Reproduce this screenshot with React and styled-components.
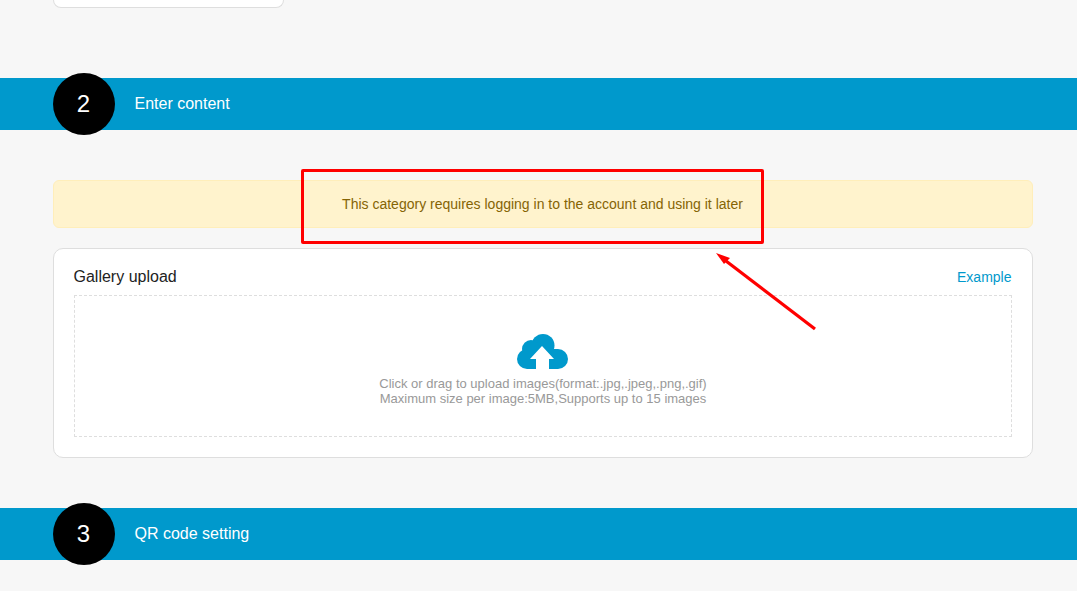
import React from "react";
import styled, { createGlobalStyle } from "styled-components";

const Global = createGlobalStyle`
  html, body { margin: 0; padding: 0; background: #f7f7f7; }
  body { font-family: "Liberation Sans", Arial, sans-serif; }
  * { box-sizing: border-box; }
`;
const Page = styled.div`
  position: relative;
  width: 1077px;
  height: 591px;
  overflow: hidden;
  background: #f7f7f7;
`;
const PrevCard = styled.div`
  width: 231px;
  height: 8px;
  margin-left: 53px;
  background: #fff;
  border: 1px solid #dedede;
  border-top: none;
  border-radius: 0 0 10px 10px;
`;
const StepBar = styled.div`
  display: flex;
  align-items: center;
  gap: 20px;
  height: 52px;
  margin-top: ${(p) => p.$top}px;
  padding-left: 53px;
  background: #0099cc;
`;
const StepNumber = styled.div`
  display: flex;
  align-items: center;
  justify-content: center;
  flex: none;
  width: 62px;
  height: 62px;
  padding-right: 1px;
  border-radius: 50%;
  background: #000;
  color: #fff;
  font-size: 24px;
`;
const StepTitle = styled.div`
  margin-left: -0.5px;
  color: #fff;
  font-size: 16px;
`;
const Content = styled.div`
  display: flex;
  flex-direction: column;
  gap: 20px;
  width: 980px;
  margin: 50px 0 0 53px;
`;
const Alert = styled.div`
  display: flex;
  align-items: center;
  justify-content: center;
  height: 48px;
  padding-right: 1px;
  background: #fff3cd;
  border: 1px solid #ffeeba;
  border-radius: 6px;
  color: #856404;
  font-size: 14px;
`;
const Card = styled.div`
  height: 210px;
  padding: 20px;
  background: #fff;
  border: 1px solid #dedede;
  border-radius: 10px;
`;
const CardHead = styled.div`
  display: flex;
  align-items: center;
  justify-content: space-between;
  height: 16px;
  margin-bottom: 10px;
`;
const CardTitle = styled.div`
  margin-left: -0.5px;
  color: #222;
  font-size: 16px;
`;
const ExampleLink = styled.a`
  margin-right: 0.5px;
  color: #0099cc;
  font-size: 14px;
  text-decoration: none;
`;
const Dropzone = styled.div`
  display: flex;
  flex-direction: column;
  align-items: center;
  height: 142px;
  padding-top: 38px;
  border: 1px dashed #dedede;
  color: #999;
  font-size: 13px;
  line-height: 15px;
  text-align: center;
`;
const CloudIcon = styled.svg`
  display: block;
  width: 51px;
  height: 35px;
  margin: 0 2px 7px 0;
  flex: none;
`;
const Annotation = styled.div`
  position: absolute;
  left: 301px;
  top: 169px;
  width: 463px;
  height: 75px;
  border: 3px solid #ff0000;
  border-radius: 2px;
  pointer-events: none;
`;
const ArrowOverlay = styled.svg`
  position: absolute;
  left: 700px;
  top: 240px;
  width: 130px;
  height: 100px;
  pointer-events: none;
`;

export default function App() {
  return (
    <Page>
      <Global />
      <PrevCard />
      <StepBar $top={70}>
        <StepNumber>2</StepNumber>
        <StepTitle>Enter content</StepTitle>
      </StepBar>
      <Content>
        <Alert>This category requires logging in to the account and using it later</Alert>
        <Card>
          <CardHead>
            <CardTitle>Gallery upload</CardTitle>
            <ExampleLink>Example</ExampleLink>
          </CardHead>
          <Dropzone>
            <CloudIcon viewBox="0 0 51 35">
              <g fill="#0099cc">
                <circle cx="26" cy="11.5" r="11.5" />
                <circle cx="14" cy="15" r="9" />
                <circle cx="10" cy="25" r="10" />
                <circle cx="41" cy="25" r="10" />
                <rect x="10" y="15" width="31" height="20" />
              </g>
              <path d="M25 12 L13 25 H19 V35 H32 V25 H37 Z" fill="#fff" />
            </CloudIcon>
            <div>Click or drag to upload images(format:.jpg,.jpeg,.png,.gif)</div>
            <div>Maximum size per image:5MB,Supports up to 15 images</div>
          </Dropzone>
        </Card>
      </Content>
      <StepBar $top={50}>
        <StepNumber>3</StepNumber>
        <StepTitle>QR code setting</StepTitle>
      </StepBar>
      <Annotation />
      <ArrowOverlay viewBox="0 0 130 100">
        <line x1="115" y1="89" x2="26" y2="21" stroke="#ff0000" strokeWidth="3.2" />
        <polygon points="16,13 30,18 24,24" fill="#ff0000" />
      </ArrowOverlay>
    </Page>
  );
}
